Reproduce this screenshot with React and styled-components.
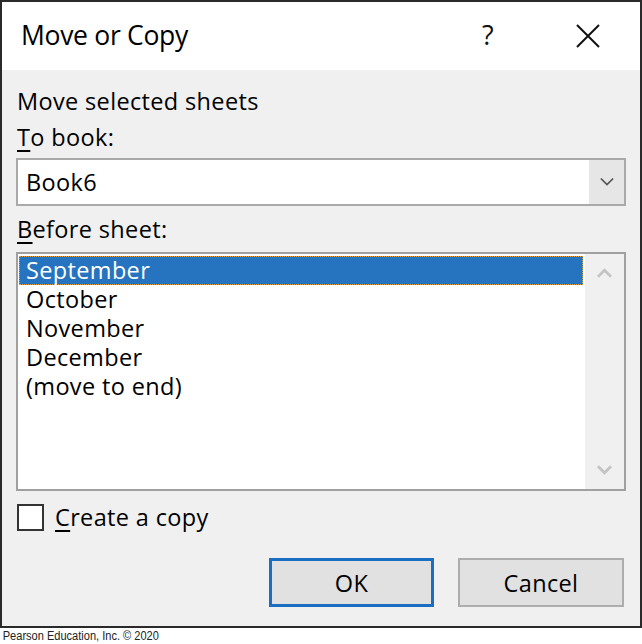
import React from "react";
import styled, { createGlobalStyle } from "styled-components";

const Global = createGlobalStyle`
  html, body { margin: 0; padding: 0; background: #ffffff; }
  body { font-family: "Open Sans", "Noto Sans", sans-serif; }
`;

const Page = styled.div`
  width: 642px;
  height: 644px;
  display: flex;
  flex-direction: column;
`;

const Dialog = styled.div`
  width: 642px;
  height: 628px;
  box-sizing: border-box;
  border: 2px solid #2a2a2a;
  display: flex;
  flex-direction: column;
  background: #f0f0f0;
`;

const TitleBar = styled.div`
  height: 68px;
  background: #ffffff;
  display: flex;
  align-items: center;
  padding-left: 19px;
  padding-right: 40px;
`;

const Title = styled.div`
  flex: 1;
  font-size: 26.5px;
  color: #000;
  letter-spacing: -0.3px;
  margin-top: -2px;
`;

const HelpGlyph = styled.div`
  font-size: 27px;
  color: #111;
  width: 20px;
  margin-right: 74px;
  margin-top: -4px;
`;

const Content = styled.div`
  flex: 1;
  display: flex;
  flex-direction: column;
  padding: 16px 14px 18px 14px;
  letter-spacing: 0.35px;
`;

const Label = styled.div`
  font-size: 23.5px;
  line-height: 30px;
  height: 30px;
  color: #000;
  padding-left: 1px;
  margin-top: ${(p) => p.$mt || 0}px;
  u { text-underline-offset: 4px; text-decoration-thickness: 2px; }
`;

const Combo = styled.div`
  margin-top: 6px;
  height: 48px;
  box-sizing: border-box;
  border: 2px solid #a9a9a9;
  background: #ffffff;
  display: flex;
  align-items: stretch;
`;

const ComboText = styled.div`
  flex: 1;
  font-size: 23.5px;
  display: flex;
  align-items: center;
  padding-left: 8px;
  color: #000;
`;

const ComboButton = styled.div`
  width: 35px;
  background: #e6e6e6;
  border-left: 2px solid #ffffff;
  display: flex;
  align-items: center;
  justify-content: center;
`;

const ListBox = styled.div`
  margin-top: 8px;
  height: 239px;
  box-sizing: border-box;
  border: 2px solid #a0a0a0;
  background: #ffffff;
  display: flex;
`;

const Items = styled.div`
  flex: 1;
  padding: 2px 2px 0 1px;
  display: flex;
  flex-direction: column;
`;

const Item = styled.div`
  height: 29px;
  box-sizing: border-box;
  line-height: 27px;
  font-size: 23.5px;
  padding-left: 6px;
  color: ${(p) => (p.$selected ? "#ffffff" : "#000")};
  background: ${(p) => (p.$selected ? "#2673c0" : "transparent")};
  border: 1px dotted ${(p) => (p.$selected ? "#e0a040" : "transparent")};
`;

const ScrollTrack = styled.div`
  width: 39px;
  background: #f0f0f0;
  display: flex;
  flex-direction: column;
  justify-content: space-between;
  align-items: center;
  padding: 14px 0 14px;
`;

const CheckRow = styled.div`
  margin-top: 12px;
  height: 28px;
  display: flex;
  align-items: center;
  gap: 11px;
  padding-left: 1px;
`;

const CheckBox = styled.div`
  width: 27px;
  height: 27px;
  box-sizing: border-box;
  border: 2px solid #333;
  background: #ffffff;
`;

const CheckLabel = styled.div`
  font-size: 23.5px;
  color: #000;
  u { text-underline-offset: 4px; text-decoration-thickness: 2px; }
`;

const Buttons = styled.div`
  margin-top: 27px;
  display: flex;
  justify-content: flex-end;
  gap: 24px;
  padding-right: 2px;
`;

const Button = styled.div`
  width: ${(p) => p.$w}px;
  height: 49px;
  box-sizing: border-box;
  background: #e1e1e1;
  border: ${(p) => (p.$default ? "3px solid #1a6fc2" : "2px solid #adadad")};
  display: flex;
  align-items: center;
  justify-content: center;
  font-size: 23.5px;
  color: #000;
`;

const Footer = styled.div`
  font-family: "Liberation Sans", Arial, sans-serif;
  font-size: 12px;
  color: #222;
  padding-left: 3px;
  margin-top: 1px;
  transform: scaleX(0.92);
  transform-origin: left center;
`;

const Chevron = ({ up, color = "#c4c4c4", w = 15, sw = 3 }) => (
  <svg width={w} height="10" viewBox="0 0 16 10">
    <polyline
      points={up ? "1,9 8,2 15,9" : "1,1 8,8 15,1"}
      fill="none"
      stroke={color}
      strokeWidth={sw}
    />
  </svg>
);

export default function App() {
  const sheets = ["September", "October", "November", "December", "(move to end)"];
  return (
    <Page>
      <Global />
      <Dialog>
        <TitleBar>
          <Title>Move or Copy</Title>
          <HelpGlyph>?</HelpGlyph>
          <svg width="24" height="24" viewBox="0 0 24 24">
            <path d="M1 1 L23 23 M23 1 L1 23" stroke="#111" strokeWidth="2" fill="none" />
          </svg>
        </TitleBar>
        <Content>
          <Label>Move selected sheets</Label>
          <Label $mt={6}>
            <u>T</u>o book:
          </Label>
          <Combo>
            <ComboText>Book6</ComboText>
            <ComboButton>
              <Chevron color="#555" w={14} sw={2} />
            </ComboButton>
          </Combo>
          <Label $mt={8}>
            <u>B</u>efore sheet:
          </Label>
          <ListBox>
            <Items>
              {sheets.map((s, i) => (
                <Item key={s} $selected={i === 0}>
                  {s}
                </Item>
              ))}
            </Items>
            <ScrollTrack>
              <Chevron up />
              <Chevron />
            </ScrollTrack>
          </ListBox>
          <CheckRow>
            <CheckBox />
            <CheckLabel>
              <u>C</u>reate a copy
            </CheckLabel>
          </CheckRow>
          <Buttons>
            <Button $default $w={165}>OK</Button>
            <Button $w={166}>Cancel</Button>
          </Buttons>
        </Content>
      </Dialog>
      <Footer>Pearson Education, Inc. © 2020</Footer>
    </Page>
  );
}
